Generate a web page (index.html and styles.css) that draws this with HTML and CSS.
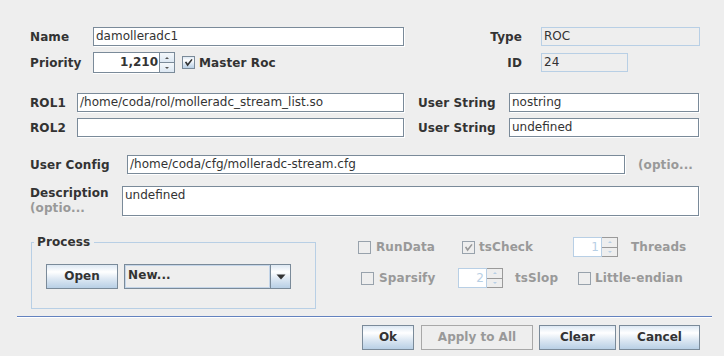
FILE: index.html
```html
<!DOCTYPE html>
<html>
<head>
<meta charset="utf-8">
<link rel="stylesheet" href="styles.css">
</head>
<body>
<div class="dlg">
  <div class="row row-name">
    <div class="left">
      <span class="lbl col-a">Name</span>
      <div class="tf f-name">damolleradc1</div>
    </div>
    <span class="lbl rlabel">Type</span>
    <div class="tf ro f-type">ROC</div>
  </div>

  <div class="row row-pri">
    <div class="left">
      <span class="lbl col-a">Priority</span>
      <div class="spinner sp-pri">
        <div class="sp-field bold">1,210</div>
        <div class="sp-arrows"><span class="sp-btn up"></span><span class="sp-btn down"></span></div>
      </div>
      <span class="cb checked master-cb"><svg width="11" height="11" viewBox="0 0 11 11"><path d="M3 5.5 L4.6 8 L8.5 3" fill="none" stroke="#333" stroke-width="1.6" stroke-linecap="square"/></svg></span>
      <span class="lbl cb-text">Master Roc</span>
    </div>
    <span class="lbl rlabel">ID</span>
    <div class="tf ro f-id">24</div>
  </div>

  <div class="row row-rol1">
    <div class="left">
      <span class="lbl col-b">ROL1</span>
      <div class="tf f-rol">/home/coda/rol/molleradc_stream_list.so</div>
    </div>
    <span class="lbl ulabel">User String</span>
    <div class="tf f-us">nostring</div>
  </div>

  <div class="row row-rol2">
    <div class="left">
      <span class="lbl col-b">ROL2</span>
      <div class="tf f-rol"></div>
    </div>
    <span class="lbl ulabel">User String</span>
    <div class="tf f-us">undefined</div>
  </div>

  <div class="row row-cfg">
    <span class="lbl col-c">User Config</span>
    <div class="tf f-cfg">/home/coda/cfg/molleradc-stream.cfg</div>
    <span class="lbl hint hint-cfg">(optio...</span>
  </div>

  <div class="row row-desc">
    <div class="desc-lbl">
      <span class="lbl">Description</span>
      <span class="lbl hint">(optio...</span>
    </div>
    <div class="tf area">undefined</div>
  </div>

  <div class="bottom">
    <div class="group">
      <div class="group-title lbl">Process</div>
      <div class="proc-row">
        <div class="btn open-btn">Open</div>
        <div class="combo">
          <div class="combo-text lbl">New...</div>
          <div class="combo-btn"><svg width="10" height="6" viewBox="0 0 10 6"><polygon points="0.5,0.5 9.5,0.5 5,5.5" fill="#333"/></svg></div>
        </div>
      </div>
    </div>

    <div class="opts">
      <div class="opt-row opt-row1">
        <div class="opt w-run"><span class="cb dis"></span><span class="lbl dtext">RunData</span></div>
        <div class="opt w-tsc"><span class="cb dis"><svg width="11" height="11" viewBox="0 0 11 11"><path d="M3 5.5 L4.6 8 L8.5 3" fill="none" stroke="#999" stroke-width="1.6" stroke-linecap="square"/></svg></span><span class="lbl dtext tsc-text">tsCheck</span></div>
        <div class="spinner sp-small dis-sp">
          <div class="sp-field">1</div>
          <div class="sp-arrows"><span class="sp-btn up"></span><span class="sp-btn down"></span></div>
        </div>
        <span class="lbl dtext threads">Threads</span>
      </div>
      <div class="opt-row opt-row2">
        <div class="opt w-spa"><span class="cb dis"></span><span class="lbl dtext">Sparsify</span></div>
        <div class="spinner sp-small dis-sp">
          <div class="sp-field">2</div>
          <div class="sp-arrows"><span class="sp-btn up"></span><span class="sp-btn down"></span></div>
        </div>
        <span class="lbl dtext tsslop">tsSlop</span>
        <div class="opt"><span class="cb dis"></span><span class="lbl dtext le-text">Little-endian</span></div>
      </div>
    </div>
  </div>

  <div class="sep"></div>

  <div class="buttons">
    <div class="btn b-ok">Ok</div>
    <div class="btn disabled b-apply">Apply to All</div>
    <div class="btn b-clear">Clear</div>
    <div class="btn b-cancel">Cancel</div>
  </div>
</div>
</body>
</html>
```

FILE: styles.css
```css
html, body {
  margin: 0;
  padding: 0;
}
body {
  background: #eeeeee;
  font-family: "DejaVu Sans", "Noto Sans", sans-serif;
  font-size: 12px;
  color: #333333;
  width: 724px;
  height: 356px;
  overflow: hidden;
}
.dlg {
  padding-top: 27px;
}
.row {
  display: flex;
  align-items: center;
  margin-left: 30px;
}
.left {
  display: flex;
  align-items: center;
  width: 374px;
  flex: none;
}
.lbl {
  font-weight: bold;
  white-space: nowrap;
  flex: none;
  letter-spacing: 0.1px;
}
.bold { font-weight: bold; }
.col-a { width: 63px; }
.col-b { width: 47px; }
.col-c { width: 97px; }
.rlabel {
  width: 118px;
  text-align: right;
}
.ulabel {
  margin-left: 14px;
  width: 91px;
}
.tf {
  box-sizing: border-box;
  height: 19px;
  border: 1px solid #7a8a99;
  background: #ffffff;
  box-shadow: 1px 1px 0 #ffffff;
  padding: 0 2px;
  line-height: 17px;
  white-space: nowrap;
  overflow: hidden;
  flex: none;
}
.tf.ro {
  background: #eeeeee;
  border-color: #b8cfe5;
  box-shadow: none;
  margin-left: 19px;
}
.f-name { width: 311px; }
.f-type { width: 159px; }
.f-id { width: 87px; }
.f-rol { width: 327px; }
.f-us { width: 190px; }
.f-cfg { width: 498px; }

.row-pri { margin-top: 6px; height: 21px; }
.row-rol1 { margin-top: 20px; }
.row-rol2 { margin-top: 6px; }
.row-cfg { margin-top: 18px; }
.row-desc { margin-top: 12px; align-items: flex-start; }

.hint { color: #999999; }
.hint-cfg { margin-left: 13px; }

.desc-lbl {
  width: 92px;
  flex: none;
  display: flex;
  flex-direction: column;
  line-height: 15px;
}
.area {
  width: 577px;
  height: 30px;
  line-height: 15px;
  padding: 1px 2px 0;
}

/* spinner */
.spinner {
  display: flex;
  flex: none;
  height: 21px;
}
.sp-pri { width: 82px; }
.sp-field {
  box-sizing: border-box;
  width: 67px;
  height: 21px;
  border: 1px solid #7a8a99;
  background: #ffffff;
  box-shadow: 0 1px 0 #ffffff;
  text-align: right;
  padding-right: 1px;
  line-height: 19px;
}
.sp-arrows {
  box-sizing: border-box;
  width: 15px;
  height: 21px;
  border: 1px solid #7a8a99;
  border-left: 0;
  display: flex;
  flex-direction: column;
}
.sp-btn {
  flex: 1;
  display: flex;
  align-items: center;
  justify-content: center;
  background: linear-gradient(#f4f8fb, #dde8f3);
}
.sp-btn.down {
  border-top: 1px solid #7a8a99;
}
.sp-btn::after {
  content: "";
  width: 0;
  height: 0;
  border-left: 2px solid transparent;
  border-right: 2px solid transparent;
}
.sp-btn.up::after { border-bottom: 2px solid #555; }
.sp-btn.down::after { border-top: 2px solid #555; }

.sp-small { width: 45px; height: 20px; }
.sp-small .sp-field { width: 29px; height: 20px; line-height: 18px; }
.sp-small .sp-arrows { width: 16px; height: 20px; }
.dis-sp .sp-field {
  border-color: #b8cfe5;
  color: #b8cfe5;
  box-shadow: none;
  padding-right: 2px;
}
.dis-sp .sp-arrows { border-color: #9a9a9a; }
.dis-sp .sp-btn { background: #eeeeee; }
.dis-sp .sp-btn.down { border-top-color: #9a9a9a; }
.dis-sp .sp-btn.up::after { border-bottom-color: #b8cfe5; }
.dis-sp .sp-btn.down::after { border-top-color: #b8cfe5; }

/* checkbox */
.cb {
  box-sizing: border-box;
  width: 13px;
  height: 13px;
  border: 1px solid #7a8a99;
  background: linear-gradient(#dde8f3 0%, #ffffff 30%, #dde8f3 60%, #b8cfe5 100%);
  display: flex;
  align-items: center;
  justify-content: center;
  flex: none;
}
.cb svg { display: block; }
.master-cb { margin-left: 7px; }
.cb-text { margin-left: 4px; }
.cb.dis {
  border-color: #98a2ac;
  background: #eeeeee;
}
.dtext { color: #999999; margin-left: 5px; }
.tsc-text { margin-left: 4px; }

/* bottom area */
.bottom {
  display: flex;
  align-items: flex-start;
  margin-left: 31px;
}
.group {
  box-sizing: border-box;
  width: 285px;
  margin-top: 26px;
  border: 1px solid #b8cfe5;
  padding: 0 0 19px 14px;
}
.group-title {
  width: fit-content;
  margin: -8px 0 0 -12px;
  padding: 0 4px 0 3px;
  line-height: 15px;
  background: #eeeeee;
}
.proc-row {
  display: flex;
  margin-top: 14px;
}
.btn {
  box-sizing: border-box;
  height: 25px;
  border: 1px solid #7a8a99;
  background: linear-gradient(#dde8f3 0%, #ffffff 30%, #dde8f3 60%, #b8cfe5 100%);
  font-weight: bold;
  text-align: center;
  line-height: 23px;
  flex: none;
  white-space: nowrap;
}
.btn.disabled {
  background: #eeeeee;
  border-color: #a8a8a8;
  color: #999999;
}
.open-btn { width: 72px; }
.combo {
  box-sizing: border-box;
  display: flex;
  width: 167px;
  height: 25px;
  margin-left: 6px;
  border: 1px solid #7a8a99;
}
.combo-text {
  flex: 1;
  border: 1px solid #c4d5e8;
  background: #eeeeee;
  padding-left: 2px;
  line-height: 19px;
}
.combo-btn {
  width: 19px;
  border-left: 1px solid #7a8a99;
  background: linear-gradient(#dde8f3 0%, #ffffff 30%, #dde8f3 60%, #b8cfe5 100%);
  display: flex;
  align-items: center;
  justify-content: center;
}

.opts {
  margin-left: 42px;
  margin-top: 21px;
}
.opt-row {
  display: flex;
  align-items: center;
  height: 20px;
}
.opt-row2 {
  margin-top: 11px;
  margin-left: 3px;
}
.opt {
  display: flex;
  align-items: center;
  flex: none;
}
.w-run { width: 104px; }
.w-tsc { width: 111px; }
.w-spa { width: 97px; }
.threads { margin-left: 13px; }
.tsslop { margin-left: 12px; width: 63px; }
.le-text { margin-left: 4px; }

.sep {
  margin: 7px 0 0 17px;
  width: 695px;
  height: 1px;
  background: #6382bf;
  border-bottom: 1px solid #ffffff;
}
.buttons {
  display: flex;
  margin: 7px 0 0 362px;
}
.b-ok { width: 52px; }
.b-apply { width: 112px; margin-left: 7px; }
.b-clear { width: 77px; margin-left: 6px; }
.b-cancel { width: 81px; margin-left: 3px; }
```
